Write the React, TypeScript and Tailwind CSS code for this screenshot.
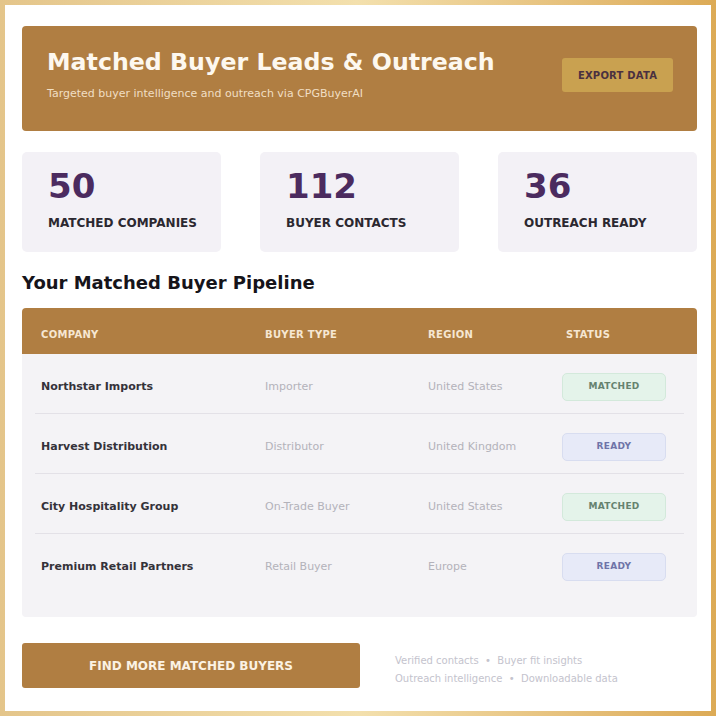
const stats = [
  { value: '50', label: 'MATCHED COMPANIES' },
  { value: '112', label: 'BUYER CONTACTS' },
  { value: '36', label: 'OUTREACH READY' },
];

type Status = 'MATCHED' | 'READY';

const leads: { company: string; type: string; region: string; status: Status }[] = [
  { company: 'Northstar Imports', type: 'Importer', region: 'United States', status: 'MATCHED' },
  { company: 'Harvest Distribution', type: 'Distributor', region: 'United Kingdom', status: 'READY' },
  { company: 'City Hospitality Group', type: 'On-Trade Buyer', region: 'United States', status: 'MATCHED' },
  { company: 'Premium Retail Partners', type: 'Retail Buyer', region: 'Europe', status: 'READY' },
];

const cols = 'grid grid-cols-[224px_163px_134px_1fr] items-center';

function StatusPill({ status }: { status: Status }) {
  const tone =
    status === 'MATCHED'
      ? 'bg-[#e4f3ea] border-[#d3e9db] text-[#66826f]'
      : 'bg-[#e7eaf8] border-[#d8ddf0] text-[#6f74a8]';
  return (
    <div
      className={`flex h-[28px] w-[104px] items-center justify-center rounded-[5px] border text-[9px] font-bold tracking-[0.3px] ${tone}`}
    >
      {status}
    </div>
  );
}

export default function App() {
  return (
    <div
      className="h-[716px] w-full bg-linear-to-r from-[#e4c58a] via-[#f3e0ad] to-[#dcaa55] p-[5px]"
      style={{ fontFamily: '"DejaVu Sans", Verdana, sans-serif' }}
    >
      <div className="h-full bg-white pl-[17px] pr-[14px] pt-[21px]">
        <header className="flex h-[105px] items-center justify-between rounded-[4px] bg-[#b07e42] pb-[7px] pl-[25px] pr-[24px]">
          <div>
            <h1 className="text-[23.7px] font-bold leading-[30px] text-[#fdf8ef]">
              Matched Buyer Leads &amp; Outreach
            </h1>
            <p className="mt-[9px] text-[11px] text-[#f1dfc4]">
              Targeted buyer intelligence and outreach via CPGBuyerAI
            </p>
          </div>
          <button className="h-[34px] w-[111px] rounded-[3px] bg-[#c9a150] text-[10px] font-bold tracking-[0.2px] text-[#4a3040]">
            EXPORT DATA
          </button>
        </header>

        <div className="mt-[21px] grid grid-cols-3 gap-[39px]">
          {stats.map((s) => (
            <div key={s.label} className="h-[100px] rounded-[5px] bg-[#f3f1f6] pl-[26px] pt-[14px]">
              <div className="text-[34px] font-bold leading-[41px] text-[#4b2b5f]">{s.value}</div>
              <div className="mt-[8px] text-[12px] font-bold leading-[16px] text-[#2b2830]">
                {s.label}
              </div>
            </div>
          ))}
        </div>

        <h2 className="mb-[13px] mt-[19px] text-[18px] font-bold leading-[24px] text-[#16141a]">
          Your Matched Buyer Pipeline
        </h2>

        <div className={`${cols} h-[46px] rounded-t-[4px] bg-[#b07e42] px-[19px] pt-[6px] text-[10px] font-bold tracking-[0.3px] text-[#f6e7d2]`}>
          <div>COMPANY</div>
          <div>BUYER TYPE</div>
          <div>REGION</div>
          <div className="pl-[4px]">STATUS</div>
        </div>

        <div className="rounded-b-[4px] bg-[#f4f3f6] px-[13px] pb-[24px]">
          {leads.map((l, i) => (
            <div
              key={l.company}
              className={`${cols} px-[6px] pb-[12px] pt-[19px] text-[11px] ${i < leads.length - 1 ? 'border-b border-[#e3e1e7]' : ''}`}
            >
              <div className="font-bold text-[#34323a]">{l.company}</div>
              <div className="text-[#b3b2ba]">{l.type}</div>
              <div className="text-[#b3b2ba]">{l.region}</div>
              <StatusPill status={l.status} />
            </div>
          ))}
        </div>

        <div className="mt-[26px] flex items-center">
          <button className="h-[45px] w-[338px] rounded-[3px] bg-[#b07e42] text-[12px] font-bold text-[#fbf2e4]">
            FIND MORE MATCHED BUYERS
          </button>
          <div className="ml-[35px] pt-[8px] text-[10px] leading-[18px] text-[#c4c3cd]">
            <div>Verified contacts&nbsp; •&nbsp; Buyer fit insights</div>
            <div>Outreach intelligence&nbsp; •&nbsp; Downloadable data</div>
          </div>
        </div>
      </div>
    </div>
  );
}
